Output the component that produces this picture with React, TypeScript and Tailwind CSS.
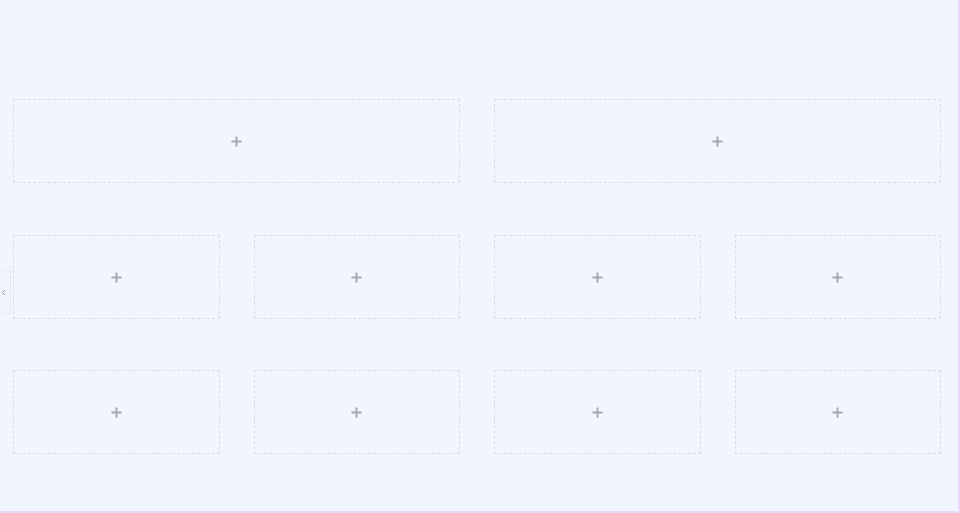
import { Plus, ChevronLeft } from 'lucide-react';

function Slot() {
  return (
    <div className="h-[84px] border border-dashed border-[#d9dde5] flex items-center justify-center">
      <Plus size={15} strokeWidth={3} className="text-[#a3a8b3]" />
    </div>
  );
}

export default function App() {
  return (
    <div className="relative h-[513px] w-full bg-[#f0f5ff] border-r-2 border-b-2 border-[#ead9fb] overflow-hidden">
      <div className="absolute left-0 top-[270px] h-[44px] w-[11px] border border-l-0 border-[#e8ebf1] flex items-center justify-start">
        <ChevronLeft size={9} strokeWidth={2.5} className="text-[#8a909c] -ml-[1px]" />
      </div>
      <div className="pt-[99px] pl-[13px] pr-[17px] flex flex-col">
        <div className="grid grid-cols-2 gap-[34px]">
          <Slot />
          <Slot />
        </div>
        <div className="grid grid-cols-4 gap-[34px] mt-[52px]">
          <Slot />
          <Slot />
          <Slot />
          <Slot />
        </div>
        <div className="grid grid-cols-4 gap-[34px] mt-[51px]">
          <Slot />
          <Slot />
          <Slot />
          <Slot />
        </div>
      </div>
    </div>
  );
}
